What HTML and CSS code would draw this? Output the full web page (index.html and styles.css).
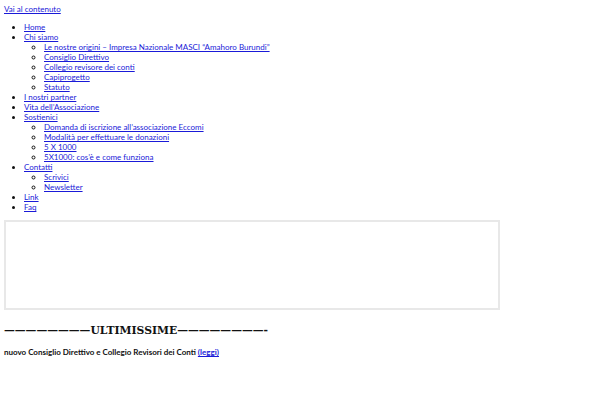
FILE: index.html
```html
<!DOCTYPE html>
<html lang="it">
<head>
<meta charset="utf-8">
<title>Eccomi</title>
<link rel="stylesheet" href="styles.css">
</head>
<body>
<a class="skip" href="#content">Vai al contenuto</a>
<ul class="menu">
  <li><a href="#">Home</a></li>
  <li><a href="#">Chi siamo</a>
    <ul class="sub">
      <li><a href="#">Le nostre origini – Impresa Nazionale MASCI “Amahoro Burundi”</a></li>
      <li><a href="#">Consiglio Direttivo</a></li>
      <li><a href="#">Collegio revisore dei conti</a></li>
      <li><a href="#">Capiprogetto</a></li>
      <li><a href="#">Statuto</a></li>
    </ul>
  </li>
  <li><a href="#">I nostri partner</a></li>
  <li><a href="#">Vita dell’Associazione</a></li>
  <li><a href="#">Sostienici</a>
    <ul class="sub">
      <li><a href="#">Domanda di iscrizione all’associazione Eccomi</a></li>
      <li><a href="#">Modalità per effettuare le donazioni</a></li>
      <li><a href="#">5 X 1000</a></li>
      <li><a href="#">5X1000: cos’è e come funziona</a></li>
    </ul>
  </li>
  <li><a href="#">Contatti</a>
    <ul class="sub">
      <li><a href="#">Scrivici</a></li>
      <li><a href="#">Newsletter</a></li>
    </ul>
  </li>
  <li><a href="#">Link</a></li>
  <li><a href="#">Faq</a></li>
</ul>
<div class="frame" id="content"></div>
<h2 class="news-title">————————ULTIMISSIME————————-</h2>
<p class="news">nuovo Consiglio Direttivo e Collegio Revisori dei Conti <a href="#">(leggi)</a></p>
</body>
</html>
```
FILE: styles.css
```css
html, body {
  margin: 0;
  background: #fff;
}
body {
  padding: 4px 4px 3px;
  font-family: Lato, "Open Sans", sans-serif;
  font-size: 8px;
  line-height: 10px;
  color: #111;
}
a {
  color: #1a1ad8;
  text-decoration: underline;
}
.skip {
  display: block;
}
.menu {
  margin: 8px 0 0;
  padding-left: 20px;
  list-style: disc;
}
.sub {
  margin: 0;
  padding-left: 20px;
  list-style: circle;
}
.frame {
  margin-top: 8px;
  width: 492px;
  height: 86px;
  border: 2px solid #e8e8e8;
}
.news-title {
  margin: 13px 0 0;
  font-family: "DejaVu Serif", serif;
  font-weight: bold;
  font-size: 10.8px;
  line-height: 16px;
  color: #111;
  white-space: nowrap;
}
.news {
  margin: 8px 0 0;
  font-weight: bold;
  font-size: 8px;
  line-height: 10px;
}
```
